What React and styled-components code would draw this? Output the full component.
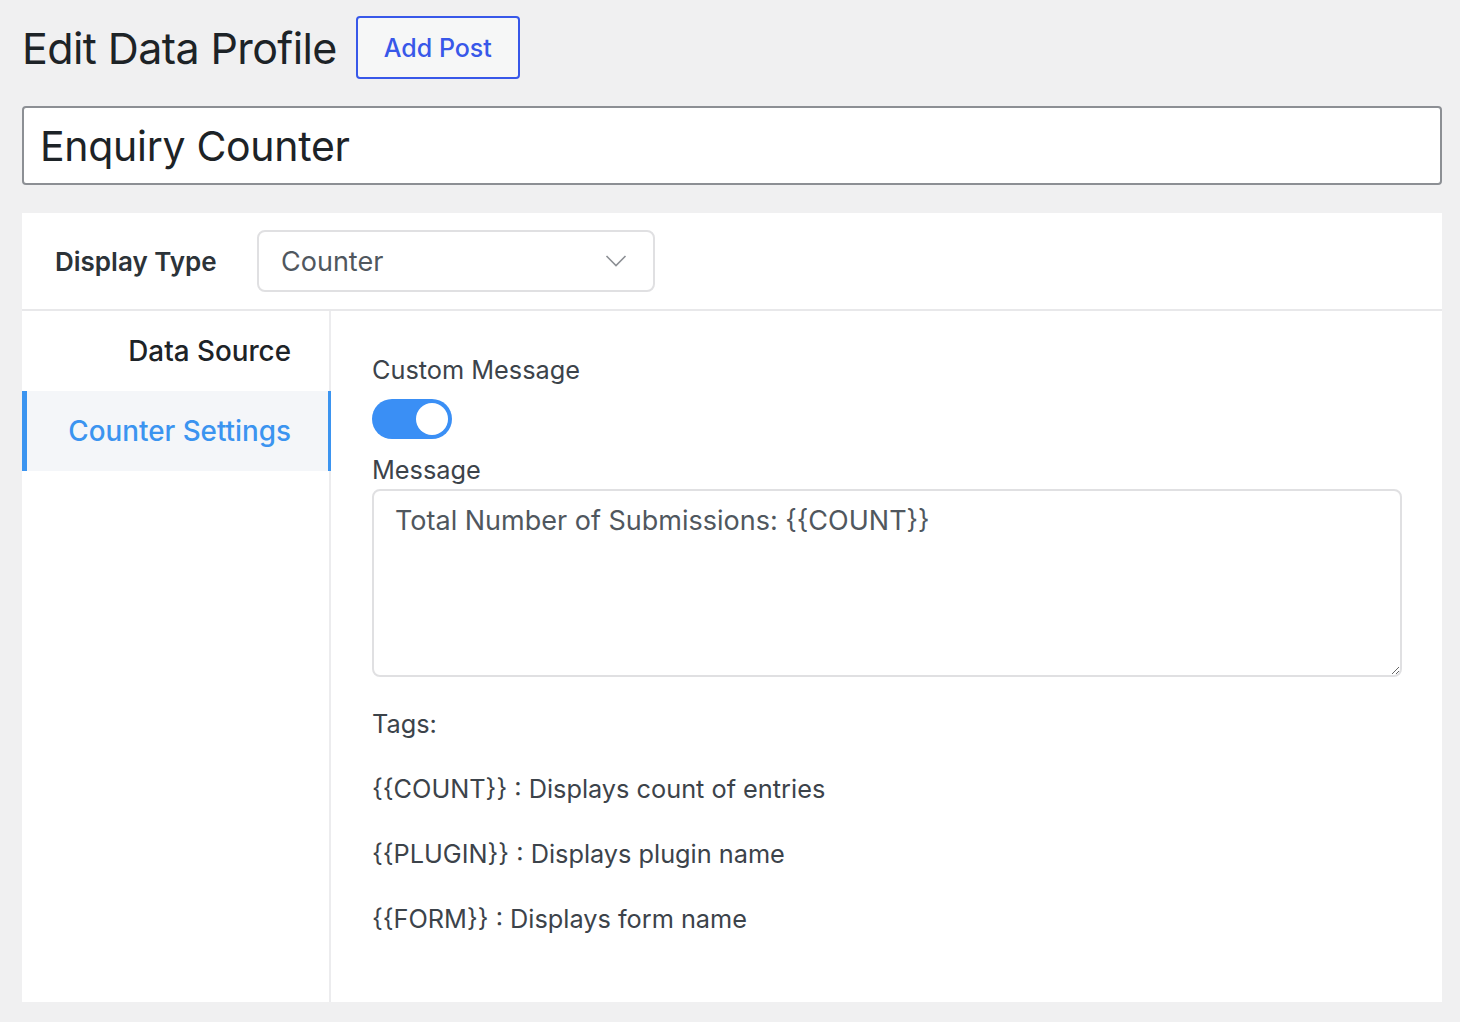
import React, { useState } from 'react';
import styled, { createGlobalStyle } from 'styled-components';

const GlobalStyle = createGlobalStyle`
  html, body {
    margin: 0;
    padding: 0;
    background: #f0f0f1;
  }
  body {
    font-family: Inter, "Noto Sans", "Liberation Sans", sans-serif;
    color: #1d2327;
  }
  * {
    box-sizing: border-box;
  }
`;

const Page = styled.div`
  padding: 16px 18px 20px 22px;
  min-height: 1022px;
`;

const Header = styled.div`
  display: flex;
  align-items: center;
  gap: 19px;
  height: 63px;
`;

const Title = styled.h1`
  margin: 0;
  font-size: 43px;
  font-weight: 400;
  letter-spacing: -0.6px;
  color: #1d2327;
`;

const OutlineButton = styled.button`
  height: 63px;
  padding: 0 26px;
  background: #f6f7f7;
  border: 2px solid #3858e9;
  border-radius: 4px;
  color: #3858e9;
  font-family: inherit;
  font-size: 25px;
  font-weight: 500;
`;

const TitleInput = styled.input`
  display: block;
  width: 1420px;
  height: 79px;
  margin-top: 27px;
  padding: 0 16px;
  border: 2px solid #8c8f94;
  border-radius: 4px;
  background: #fff;
  font-family: inherit;
  font-size: 41px;
  letter-spacing: -0.3px;
  color: #1d2327;
  outline: none;
`;

const Card = styled.section`
  margin-top: 28px;
  width: 1420px;
  height: 789px;
  background: #fff;
  display: flex;
  flex-direction: column;
`;

const TypeRow = styled.div`
  display: flex;
  align-items: center;
  height: 98px;
  padding-left: 33px;
  border-bottom: 2px solid #e8e8ea;
`;

const TypeLabel = styled.label`
  width: 202px;
  font-size: 26px;
  font-weight: 600;
  color: #2c3338;
`;

const Select = styled.div`
  width: 398px;
  height: 62px;
  display: flex;
  align-items: center;
  justify-content: space-between;
  padding: 0 26px 0 22px;
  border: 2px solid #e0e0e2;
  border-radius: 8px;
  font-size: 27px;
  color: #50575e;
`;

const Body = styled.div`
  flex: 1;
  display: flex;
`;

const Sidebar = styled.nav`
  width: 309px;
  border-right: 2px solid #ececee;
  display: flex;
  flex-direction: column;
`;

const Tab = styled.div`
  height: 80px;
  display: flex;
  align-items: center;
  justify-content: flex-end;
  padding-right: 37px;
  margin-right: -2px;
  font-size: 27.8px;
  font-weight: 500;
  color: ${(props) => (props.active ? '#3b94f0' : '#1d2327')};
  background: ${(props) => (props.active ? '#f4f6f9' : 'transparent')};
  border-left: 5px solid ${(props) => (props.active ? '#3b94f0' : 'transparent')};
  border-right: 3px solid ${(props) => (props.active ? '#3b94f0' : 'transparent')};
`;

const Content = styled.div`
  flex: 1;
  padding: 42px 40px 0 41px;
  display: flex;
  flex-direction: column;
`;

const FieldLabel = styled.div`
  font-size: 25.3px;
  line-height: 34px;
  color: #3c434a;
`;

const Toggle = styled.button`
  position: relative;
  width: 80px;
  height: 40px;
  margin: 12px 0 14px;
  padding: 0;
  border: none;
  border-radius: 20px;
  background: ${(props) => (props.on ? '#3a8ff5' : '#c3c4c7')};

  &::after {
    content: '';
    position: absolute;
    top: 4px;
    left: ${(props) => (props.on ? '44px' : '4px')};
    width: 32px;
    height: 32px;
    border-radius: 50%;
    background: #fff;
  }
`;

const TextArea = styled.textarea`
  width: 1030px;
  height: 188px;
  margin-top: 2px;
  padding: 12px 21px;
  border: 2px solid #e0e0e2;
  border-radius: 8px;
  font-family: inherit;
  font-size: 27px;
  line-height: 36px;
  color: #50575e;
  resize: vertical;
  outline: none;
`;

const Tags = styled.div`
  margin-top: 30px;
  display: flex;
  flex-direction: column;
  gap: 31px;
`;

const TagLine = styled.div`
  font-size: 25.3px;
  line-height: 34px;
  color: #3c434a;
`;

const Chevron = () => (
  <svg width="22" height="14" viewBox="0 0 22 14" fill="none">
    <path d="M1.5 2 L11 11.5 L20.5 2" stroke="#8c8f94" strokeWidth="1.6" />
  </svg>
);

const tags = [
  '{{COUNT}} : Displays count of entries',
  '{{PLUGIN}} : Displays plugin name',
  '{{FORM}} : Displays form name',
];

export default function App() {
  const [on, setOn] = useState(true);
  const [message, setMessage] = useState('Total Number of Submissions: {{COUNT}}');

  return (
    <Page>
      <GlobalStyle />
      <Header>
        <Title>Edit Data Profile</Title>
        <OutlineButton>Add Post</OutlineButton>
      </Header>
      <TitleInput defaultValue="Enquiry Counter" />
      <Card>
        <TypeRow>
          <TypeLabel>Display Type</TypeLabel>
          <Select>
            Counter
            <Chevron />
          </Select>
        </TypeRow>
        <Body>
          <Sidebar>
            <Tab>Data Source</Tab>
            <Tab active>Counter Settings</Tab>
          </Sidebar>
          <Content>
            <FieldLabel>Custom Message</FieldLabel>
            <Toggle on={on} onClick={() => setOn(!on)} />
            <FieldLabel>Message</FieldLabel>
            <TextArea value={message} onChange={(e) => setMessage(e.target.value)} />
            <Tags>
              <TagLine>Tags:</TagLine>
              {tags.map((t) => (
                <TagLine key={t}>{t}</TagLine>
              ))}
            </Tags>
          </Content>
        </Body>
      </Card>
    </Page>
  );
}
